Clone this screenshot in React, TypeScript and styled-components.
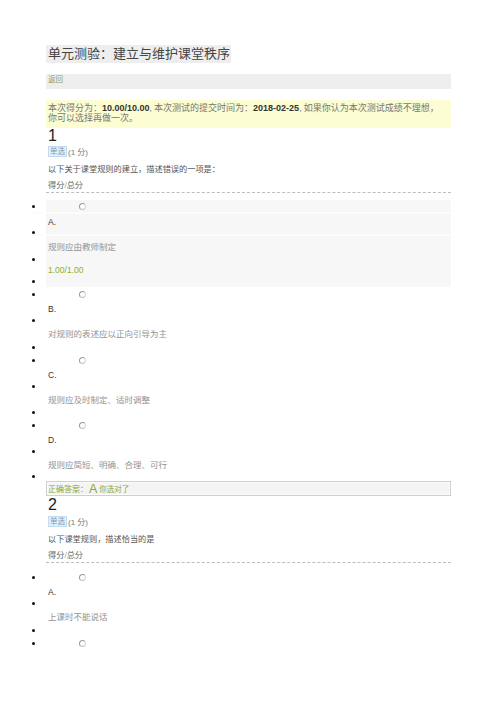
import React from 'react';
import styled, { createGlobalStyle } from 'styled-components';

const SERIF = `"Liberation Serif", "Noto Sans CJK SC", serif`;
const SANS = `"Liberation Sans", "Noto Sans CJK SC", sans-serif`;

const GlobalStyle = createGlobalStyle`
  html, body { margin: 0; padding: 0; background: #fff; }
  body { font-family: ${SERIF}; color: #444; }
`;

const Page = styled.div`
  width: 405px;
  padding: 45px 45px 0 46px;
  display: flex;
  flex-direction: column;
`;

const TitleBar = styled.h1`
  align-self: flex-start;
  margin: 0;
  height: 18px;
  line-height: 18px;
  padding: 0 1px 0 2px;
  background: #eeeeee;
  font-size: 13px;
  font-weight: normal;
  color: #444;
`;

const BackBar = styled.div`
  margin-top: 11px;
  height: 15px;
  background: #eeeeee;
  padding: 1px 2px 0;
  box-sizing: border-box;
  font-size: 7.5px;
  line-height: 9px;
  color: #8fa060;
`;

const ScoreBox = styled.div`
  margin-top: 11px;
  height: 28px;
  box-sizing: border-box;
  padding: 3px 2px 0;
  background: #fcfdd2;
  font-size: 9px;
  line-height: 10px;
  color: #777;
  white-space: nowrap;
`;

const Strong = styled.b`
  font-family: ${SANS};
  font-weight: bold;
  color: #333;
`;

const QNumber = styled.div<{ $h: number }>`
  height: ${p => p.$h}px;
  display: flex;
  align-items: center;
  padding-left: 2px;
  font-family: ${SANS};
  font-size: 16px;
  color: #222;
`;

const MetaRow = styled.div<{ $h: number }>`
  height: ${p => p.$h}px;
  display: flex;
  align-items: center;
  padding-left: 2px;
  font-size: 8px;
  color: #666;
`;

const TypeTag = styled.span`
  display: inline-block;
  height: 11px;
  line-height: 10px;
  padding: 0 1px;
  box-sizing: border-box;
  background: #e4f1f9;
  border: 1px solid #c3dbea;
  color: #7b9cbd;
  font-size: 7.5px;
`;

const Points = styled.span`
  font-family: ${SANS};
  color: #777;
  margin-left: 1px;
`;

const Question = styled.div`
  height: 16px;
  display: flex;
  align-items: center;
  padding-left: 2px;
  font-size: 8.2px;
  color: #555;
`;

const ScoreHead = styled.div`
  height: 16px;
  display: flex;
  align-items: center;
  padding-left: 2px;
  font-size: 8.2px;
  color: #666;
  border-bottom: 1px dashed #bdbdbd;
`;

const OptionList = styled.ul`
  list-style: none;
  margin: 0;
  padding: 7px 0 0;
`;

const OptionBlock = styled.li<{ $hl?: boolean }>`
  display: flex;
  flex-direction: column;
  background: ${p => (p.$hl ? '#f7f7f7' : 'transparent')};
`;

const Row = styled.div<{ $h: number; $sep?: boolean }>`
  display: flex;
  align-items: center;
  height: ${p => p.$h}px;
  margin-left: -16px;
  border-bottom: ${p => (p.$sep ? '2px solid #fcfcfc' : 'none')};
  box-sizing: border-box;
`;

const Gutter = styled.span`
  width: 16px;
  flex: none;
  align-self: stretch;
  display: flex;
  align-items: center;
  background: #fff;
`;

const Dot = styled.span`
  width: 3px;
  height: 3px;
  margin-left: 2px;
  border-radius: 50%;
  background: #111;
`;

const Radio = styled.span`
  width: 7px;
  height: 7px;
  margin-left: 33px;
  box-sizing: border-box;
  border-radius: 50%;
  border: 1px solid #9a9a9a;
  border-right-color: #d8d8d8;
  border-bottom-color: #c4c4c4;
  background: radial-gradient(circle at 40% 35%, #ffffff 40%, #e6e6e6 100%);
`;

const Letter = styled.span`
  padding-left: 2px;
  font-family: ${SANS};
  font-size: 8.5px;
  color: #333;
`;

const OptionText = styled.span`
  padding-left: 2px;
  padding-top: 2px;
  font-size: 8.5px;
  color: #939393;
`;

const Earned = styled.span`
  padding-left: 2px;
  font-family: ${SANS};
  font-size: 8.5px;
  color: #93ae2a;
`;

const AnswerBox = styled.div`
  height: 15px;
  box-sizing: border-box;
  border: 1px solid #cfcfcf;
  box-shadow: inset 0 0 0 1px #fbfbfb;
  background: #f4f4f4;
  display: flex;
  align-items: center;
  padding-left: 1px;
  font-size: 8px;
  color: #8aa637;
`;

const AnswerLetter = styled.span`
  font-family: ${SANS};
  font-size: 12.5px;
  line-height: 12px;
  color: #8aa637;
  margin: 0 2px 0 1px;
`;

const Verdict = styled.span`
  font-size: 7.5px;
`;

type Opt = {
  letter: string;
  text: string;
  highlighted?: boolean;
  earned?: string;
  lastH?: number;
  radioOnly?: boolean;
};

const BulletRow = ({ h, sep }: { h: number; sep?: boolean }) => (
  <Row $h={h} $sep={sep}>
    <Gutter>
      <Dot />
    </Gutter>
  </Row>
);

const Option = ({ o }: { o: Opt }) => (
  <OptionBlock $hl={o.highlighted}>
    <Row $h={14} $sep={o.highlighted}>
      <Gutter>
        <Dot />
      </Gutter>
      <Radio />
    </Row>
    {!o.radioOnly && (
      <>
        <Row $h={16}>
          <Gutter />
          <Letter>{o.letter}.</Letter>
        </Row>
        <BulletRow h={6} sep={o.highlighted} />
        <Row $h={18}>
          <Gutter />
          <OptionText>{o.text}</OptionText>
        </Row>
        {o.earned ? (
          <>
            <BulletRow h={10} />
            <Row $h={11}>
              <Gutter />
              <Earned>{o.earned}</Earned>
            </Row>
            <BulletRow h={12} />
          </>
        ) : (
          <BulletRow h={o.lastH ?? 12} />
        )}
      </>
    )}
  </OptionBlock>
);

const q1: Opt[] = [
  { letter: 'A', text: '规则应由教师制定', highlighted: true, earned: '1.00/1.00' },
  { letter: 'B', text: '对规则的表述应以正向引导为主' },
  { letter: 'C', text: '规则应及时制定、适时调整', lastH: 11 },
  { letter: 'D', text: '规则应简短、明确、合理、可行', lastH: 9 },
];

const q2: Opt[] = [
  { letter: 'A', text: '上课时不能说话' },
  { letter: 'B', text: '', radioOnly: true },
];

export default function App() {
  return (
    <>
      <GlobalStyle />
      <Page>
        <TitleBar>单元测验：建立与维护课堂秩序</TitleBar>
        <BackBar>返回</BackBar>
        <ScoreBox>
          本次得分为：<Strong>10.00/10.00</Strong>, 本次测试的提交时间为：<Strong>2018-02-25</Strong>, 如果你认为本次测试成绩不理想，
          <br />
          你可以选择再做一次。
        </ScoreBox>

        <QNumber $h={15}>1</QNumber>
        <MetaRow $h={17}>
          <TypeTag>单选</TypeTag>
          <Points>(1 分)</Points>
        </MetaRow>
        <Question>以下关于课堂规则的建立，描述错误的一项是：</Question>
        <ScoreHead>得分/总分</ScoreHead>
        <OptionList>
          {q1.map(o => (
            <Option key={o.letter} o={o} />
          ))}
        </OptionList>
        <AnswerBox>
          正确答案：<AnswerLetter>A</AnswerLetter>
          <Verdict>你选对了</Verdict>
        </AnswerBox>

        <QNumber $h={17}>2</QNumber>
        <MetaRow $h={17}>
          <TypeTag>单选</TypeTag>
          <Points>(1 分)</Points>
        </MetaRow>
        <Question>以下课堂规则，描述恰当的是</Question>
        <ScoreHead>得分/总分</ScoreHead>
        <OptionList>
          {q2.map(o => (
            <Option key={o.letter} o={o} />
          ))}
        </OptionList>
      </Page>
    </>
  );
}
